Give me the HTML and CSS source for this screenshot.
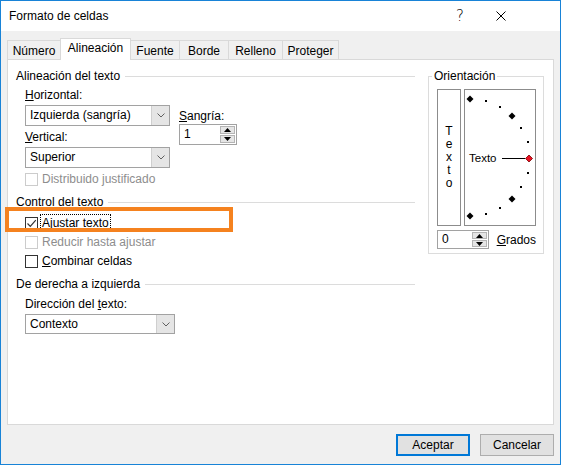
FILE: index.html
```html
<!DOCTYPE html>
<html lang="es">
<head>
<meta charset="utf-8">
<title>Formato de celdas</title>
<link rel="stylesheet" href="styles.css">
</head>
<body>
<div class="dialog">
  <div class="titlebar">
    <span class="title">Formato de celdas</span>
    <span class="winbtn help">?</span>
    <span class="winbtn close"><svg width="10" height="10" viewBox="0 0 10 10"><path d="M0.5 0.5 L9.5 9.5 M9.5 0.5 L0.5 9.5" stroke="#000" stroke-width="1" fill="none"/></svg></span>
  </div>
  <div class="content">
    <div class="tabs">
      <div class="tab t-numero">Número</div>
      <div class="tab t-alin active">Alineación</div>
      <div class="tab t-fuente">Fuente</div>
      <div class="tab t-borde">Borde</div>
      <div class="tab t-relleno">Relleno</div>
      <div class="tab t-proteger">Proteger</div>
    </div>
    <div class="panel">
      <div class="left">
        <div class="ghead"><span>Alineación del texto</span></div>
        <div class="indent">
          <div class="align-row">
            <div class="col-main">
              <div class="lbl"><u>H</u>orizontal:</div>
              <div class="select s-h"><span class="val">Izquierda (sangría)</span><span class="drop"><svg width="8" height="5" viewBox="0 0 8 5"><path d="M0.5 0.5 L4 4 L7.5 0.5" stroke="#606060" fill="none"/></svg></span></div>
              <div class="lbl lbl-v"><u>V</u>ertical:</div>
              <div class="select s-v"><span class="val">Superior</span><span class="drop"><svg width="8" height="5" viewBox="0 0 8 5"><path d="M0.5 0.5 L4 4 L7.5 0.5" stroke="#606060" fill="none"/></svg></span></div>
            </div>
            <div class="col-sangria">
              <div class="lbl lbl-s"><u>S</u>angría:</div>
              <div class="spin s-sangria"><span class="val">1</span><span class="spinbtns"><span class="sb"><svg width="7" height="4" viewBox="0 0 7 4"><path d="M0 4 L3.5 0 L7 4 Z" fill="#000"/></svg></span><span class="sb"><svg width="7" height="4" viewBox="0 0 7 4"><path d="M0 0 L3.5 4 L7 0 Z" fill="#000"/></svg></span></span></div>
            </div>
          </div>
          <div class="chk disabled r-dist"><span class="cb"></span><span class="ctext">Distribuido justificado</span></div>
        </div>
        <div class="ghead h-control"><span>Control del texto</span></div>
        <div class="indent">
          <div class="chk r-ajustar"><span class="cb"><svg width="11" height="11" viewBox="0 0 11 11"><path d="M1.5 5.5 L4.3 8.3 L9.8 2.2" stroke="#333" stroke-width="1.2" fill="none"/></svg></span><span class="ctext focus">Ajustar te<u>x</u>to</span></div>
          <div class="chk disabled r-reducir"><span class="cb"></span><span class="ctext">Reducir hasta ajustar</span></div>
          <div class="chk r-combinar"><span class="cb"></span><span class="ctext"><u>C</u>ombinar celdas</span></div>
        </div>
        <div class="ghead h-dir"><span>De derecha a izquierda</span></div>
        <div class="indent">
          <div class="lbl lbl-d">Dirección del <u>t</u>exto:</div>
          <div class="select s-d"><span class="val">Contexto</span><span class="drop"><svg width="8" height="5" viewBox="0 0 8 5"><path d="M0.5 0.5 L4 4 L7.5 0.5" stroke="#606060" fill="none"/></svg></span></div>
        </div>
      </div>
      <fieldset class="orient">
        <legend>Orientación</legend>
        <div class="orient-row">
          <div class="vbox"><span>T</span><span>e</span><span>x</span><span>t</span><span>o</span></div>
          <div class="semi">
            <svg class="semi-svg" width="70" height="135" viewBox="0 0 70 135">
              <g fill="#000">
                <polygon points="5,5.5 8.5,9 5,12.5 1.5,9"/>
                <rect x="20" y="10" width="2" height="2"/>
                <rect x="34" y="16" width="2" height="2"/>
                <polygon points="47,22.5 50.5,26 47,29.5 43.5,26"/>
                <rect x="55" y="37" width="2" height="2"/>
                <rect x="62" y="51" width="2" height="2"/>
                <rect x="62" y="82" width="2" height="2"/>
                <rect x="55" y="96" width="2" height="2"/>
                <polygon points="47,105.5 50.5,109 47,112.5 43.5,109"/>
                <rect x="34" y="117" width="2" height="2"/>
                <rect x="20" y="123" width="2" height="2"/>
                <polygon points="5,122.5 8.5,126 5,129.5 1.5,126"/>
              </g>
              <line x1="37" y1="68.5" x2="60" y2="68.5" stroke="#000" stroke-width="1"/>
              <polygon points="64,65 67.5,68.5 64,72 60.5,68.5" fill="#e81123" stroke="#7a0000" stroke-width="0.8"/>
            </svg>
            <span class="semi-label">Texto</span>
          </div>
        </div>
        <div class="grados-row">
          <div class="spin s-grados"><span class="val">0</span><span class="spinbtns"><span class="sb"><svg width="7" height="4" viewBox="0 0 7 4"><path d="M0 4 L3.5 0 L7 4 Z" fill="#000"/></svg></span><span class="sb"><svg width="7" height="4" viewBox="0 0 7 4"><path d="M0 0 L3.5 4 L7 0 Z" fill="#000"/></svg></span></span></div>
          <span class="grados"><u>G</u>rados</span>
        </div>
      </fieldset>
    </div>
    <div class="buttons">
      <button class="btn default">Aceptar</button>
      <button class="btn">Cancelar</button>
    </div>
  </div>
  <div class="highlight"></div>
</div>
</body>
</html>
```

FILE: styles.css
```css
* { box-sizing: border-box; }
html, body { margin: 0; padding: 0; background: #fff; }
body {
  font-family: "Liberation Sans", Arial, sans-serif;
  font-size: 12px;
  color: #000;
}
.dialog {
  width: 561px;
  height: 465px;
  border: 1px solid #1883d7;
  background: #f0f0f0;
  display: flex;
  flex-direction: column;
  position: relative;
}
.titlebar {
  height: 30px;
  flex: none;
  background: #fff;
  display: flex;
  align-items: center;
  padding-left: 8px;
  padding-right: 41px;
}
.title { flex: 1; font-size: 12px; }
.winbtn {
  width: 36px;
  height: 30px;
  display: flex;
  align-items: center;
  justify-content: center;
}
.help { font-size: 15px; font-family: "DejaVu Sans", sans-serif; font-weight: 300; margin-right: 5px; }
.close svg { display: block; }
.content {
  flex: 1;
  padding: 7px 6px 0 6px;
  display: flex;
  flex-direction: column;
}
.tabs {
  height: 21px;
  display: flex;
  align-items: flex-end;
}
.tab {
  height: 19px;
  border: 1px solid #d9d9d9;
  border-bottom: none;
  background: #f0f0f0;
  text-align: center;
  line-height: 15px;
  padding-top: 3px;
  margin-left: -1px;
}
.tab:first-child { margin-left: 0; }
.tab.active {
  height: 22px;
  margin-bottom: -1px;
  background: #fff;
  padding-top: 2px;
  position: relative;
  z-index: 1;
}
.t-numero { width: 54px; }
.t-alin { width: 71px; }
.t-fuente { width: 50px; }
.t-borde { width: 50px; }
.t-relleno { width: 55px; }
.t-proteger { width: 57px; }
.panel {
  width: 547px;
  height: 366px;
  border: 1px solid #d9d9d9;
  background: #fff;
  display: flex;
  align-items: flex-start;
  padding: 8px 0 0 8px;
  gap: 13px;
}
.left { width: 399px; }
.ghead {
  height: 16px;
  line-height: 16px;
  display: flex;
  align-items: center;
}
.ghead::after {
  content: "";
  flex: 1;
  height: 1px;
  background: #dcdcdc;
  margin-left: 5px;
}
.indent { padding-left: 9px; }
.lbl { height: 16px; line-height: 16px; }
.align-row { display: flex; gap: 9px; margin-top: 3px; }
.col-main { width: 145px; }
.select {
  display: flex;
  height: 21px;
  border: 1px solid #a2a2a2;
  background: #fff;
  margin-top: 2px;
}
.select .val { flex: 1; padding-left: 4px; line-height: 19px; white-space: nowrap; }
.select .drop {
  width: 18px;
  background: #e5e5e5;
  border-left: 1px solid #cfcfcf;
  display: flex;
  align-items: center;
  justify-content: center;
}
.select .drop svg { display: block; }
.lbl-v { margin-top: 3px; }
.s-d { width: 150px; height: 20px; }
.s-d .val { line-height: 18px; }
.col-sangria { padding-top: 22px; }
.lbl-s { line-height: 15px; height: 15px; }
.spin {
  display: flex;
  height: 21px;
  border: 1px solid #a2a2a2;
  background: #fff;
}
.spin .val { flex: 1; padding-left: 4px; line-height: 19px; }
.spinbtns {
  width: 16px;
  padding: 1px 1px 1px 0;
  display: flex;
  flex-direction: column;
  gap: 1px;
}
.sb {
  flex: 1;
  background: #e5e5e5;
  border: 1px solid #b4b4b4;
  display: flex;
  align-items: center;
  justify-content: center;
}
.sb svg { display: block; }
.s-sangria { width: 58px; }
.chk {
  height: 16px;
  display: flex;
  align-items: center;
}
.cb {
  width: 13px;
  height: 13px;
  border: 1px solid #333;
  background: #fff;
  margin-right: 2px;
  display: flex;
  align-items: center;
  justify-content: center;
  flex: none;
}
.cb svg { display: block; }
.ctext {
  border: 1px solid transparent;
  padding: 0 1px;
  line-height: 16px;
  white-space: nowrap;
}
.ctext.focus { border: 1px dotted #000; }
.chk.disabled .cb { border-color: #cccccc; }
.chk.disabled .ctext { color: #8d8d8d; }
.r-dist { margin-top: 3px; }
.h-control { margin-top: 7px; }
.r-ajustar { margin-top: 5px; }
.r-reducir { margin-top: 3px; }
.r-combinar { margin-top: 3px; }
.h-dir { margin-top: 7px; }
.lbl-d { margin-top: 4px; }
.orient {
  width: 116px;
  margin: 0;
  border: 1px solid #dcdcdc;
  padding: 5px 7px 4px 8px;
  min-width: 0;
}
.orient legend {
  padding: 0 2px;
  margin-left: -5px;
  line-height: 16px;
}
.orient-row { display: flex; gap: 3px; }
.vbox {
  width: 24px;
  height: 137px;
  border: 1px solid #8c8c8c;
  display: flex;
  flex-direction: column;
  align-items: center;
  justify-content: center;
  line-height: 13px;
}
.semi {
  width: 72px;
  height: 137px;
  border: 1px solid #8c8c8c;
  display: grid;
}
.semi-svg { grid-area: 1 / 1; display: block; }
.semi-label {
  grid-area: 1 / 1;
  align-self: center;
  justify-self: start;
  margin-left: 4px;
  line-height: 14px;
  font-size: 11.5px;
}
.grados-row {
  display: flex;
  align-items: center;
  gap: 8px;
  margin-top: 4px;
}
.s-grados { width: 54px; height: 19px; }
.s-grados .val { line-height: 17px; }
.buttons {
  display: flex;
  justify-content: flex-end;
  gap: 10px;
  margin-top: 9px;
}
.btn {
  width: 74px;
  height: 22px;
  background: #e1e1e1;
  border: 1px solid #adadad;
  font-family: inherit;
  font-size: 12px;
  color: #000;
  padding: 0;
  margin: 0;
}
.btn.default { border: 2px solid #0078d7; }
.highlight {
  position: absolute;
  left: 4px;
  top: 206px;
  width: 228px;
  height: 25px;
  border: 4px solid #f5821f;
  pointer-events: none;
}
```
